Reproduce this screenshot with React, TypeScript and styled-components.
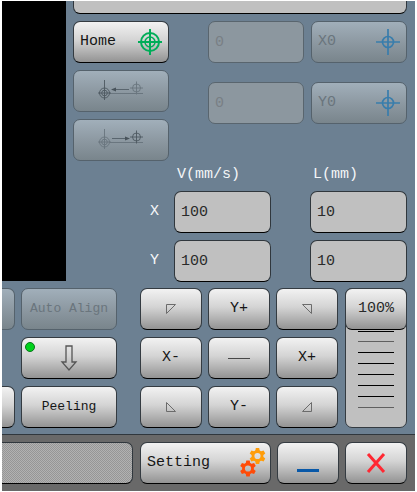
import React, { useState } from "react";
import styled, { createGlobalStyle, css } from "styled-components";

const GlobalStyle = createGlobalStyle`
  *, *::before, *::after { box-sizing: border-box; }
  body { margin: 0; background: #fff; }
  body, button, input, output {
    font-family: "Liberation Mono", "Courier New", monospace;
    font-size: 15px;
    line-height: 18px;
  }
`;

const Screen = styled.main`
  padding: 1px 2px;
`;

const Console = styled.div`
  background: #6c8092;
  overflow: hidden;
`;

const Upper = styled.div`
  display: flex;
  height: 280px;
`;

const Preview = styled.div`
  width: 64px;
  flex: none;
  background: #000;
`;

const Controls = styled.section`
  flex: 1;
  min-width: 0;
  padding: 0 8px 0 7px;
`;

const fieldLook = css`
  width: 100%;
  min-width: 0;
  margin: 0;
  color: #2a2a2a;
  background: #c0c0c0;
  border: 1px solid #30373d;
  border-bottom-color: #000;
  border-radius: 7px;
  outline: none;
`;

const MessageField = styled.input`
  ${fieldLook}
  display: block;
  height: 13px;
  border-top: 0;
  border-radius: 0 0 7px 7px;
`;

const Field = styled.input`
  ${fieldLook}
  height: 42px;
  padding: 0 6px;

  &:disabled {
    color: #797f85;
    background: #8c979f;
    border-color: #59656e;
  }
`;

const Key = styled.button<{ $small?: boolean; $spread?: boolean; $cut?: boolean }>`
  position: relative;
  display: flex;
  align-items: center;
  justify-content: ${(p) => (p.$spread ? "space-between" : "center")};
  width: 100%;
  min-width: 0;
  height: 42px;
  margin: 0;
  padding: ${(p) => (p.$spread ? "0 6px" : "0")};
  font-size: ${(p) => (p.$small ? "13px" : "15px")};
  white-space: nowrap;
  color: #161616;
  background: linear-gradient(#f2f2f2, #d4d4d4 45%, #939393);
  border: 1px solid #343b41;
  border-bottom-color: #000;
  border-radius: 7px;

  &:disabled {
    color: #6a757d;
    background: linear-gradient(#a1afba, #8d99a2 50%, #79858c);
    border-color: #55626c;
  }

  ${(p) =>
    p.$cut &&
    css`
      border-left: 0;
      border-radius: 0 7px 7px 0;
    `}
`;

const KeyText = styled.span`
  display: block;
`;

const Origins = styled.div`
  display: grid;
  grid-template-columns: 96fr 25px 96fr 96fr;
  column-gap: 7px;
  margin-top: 7px;
`;

const Stack = styled.div`
  display: grid;
  align-content: start;
  row-gap: 7px;
`;

const OriginPair = styled.div`
  grid-column: 3 / 5;
  display: grid;
  grid-template-columns: 1fr 1fr;
  align-content: start;
  gap: 19px 7px;
`;

const Speeds = styled.div`
  display: grid;
  grid-template-columns: 94px 1fr 25px 1fr;
  gap: 7px;
  align-items: center;
  margin-top: 5px;
  color: #f4f6f8;
`;

const ColumnTitle = styled.span<{ $column: number }>`
  grid-column: ${(p) => p.$column};
  padding-left: 3px;
  white-space: nowrap;
`;

const AxisName = styled.span`
  grid-column: 1;
  justify-self: end;
  padding-right: 8px;
`;

const LengthCell = styled.div`
  grid-column: 4;
`;

const Lower = styled.section`
  display: grid;
  grid-template-columns: 13px minmax(0, 330fr) minmax(0, 62fr);
  padding: 7px 8px 6px 0;
`;

const Actions = styled.div`
  display: grid;
  grid-template-columns: minmax(0, 96fr) minmax(0, 198fr);
  column-gap: 23px;
  padding: 0 7px 0 6px;
`;

const CutSpace = styled.div`
  height: 42px;
`;

const JogPad = styled.div`
  display: grid;
  grid-template-columns: repeat(3, 1fr);
  gap: 7px 6px;
`;

const StatusLamp = styled.span`
  position: absolute;
  top: 4px;
  left: 3px;
  width: 10px;
  height: 10px;
  background: #00d21c;
  border: 1px solid #08751a;
  border-radius: 50%;
`;

const Slider = styled.div`
  position: relative;
  height: 140px;
  background: #c0c0c0;
  border: 1px solid #343b41;
  border-radius: 7px;
`;

const Ticks = styled.svg`
  display: block;
  width: 100%;
  height: 100%;
`;

const Range = styled.input`
  position: absolute;
  inset: -1px;
  width: calc(100% + 2px);
  height: 140px;
  margin: 0;
  appearance: none;
  background: transparent;
  writing-mode: vertical-lr;
  direction: rtl;
  outline: none;

  &::-webkit-slider-runnable-track {
    width: 100%;
    height: 100%;
  }

  &::-webkit-slider-thumb {
    appearance: none;
    width: 100%;
    height: 42px;
    background: linear-gradient(#f2f2f2, #d4d4d4 45%, #939393);
    border: 1px solid #343b41;
    border-bottom-color: #000;
    border-radius: 7px;
  }
`;

const RangeValue = styled.output`
  position: absolute;
  left: 0;
  right: 0;
  text-align: center;
  color: #2a2a2a;
  pointer-events: none;
`;

const Footer = styled.footer`
  display: grid;
  grid-template-columns: minmax(0, 131fr) minmax(0, 267fr);
  column-gap: 7px;
  padding: 7px 8px 7px 0;
  background: #696969;
  border-top: 1px solid #30373d;
`;

const StatusBar = styled.div`
  height: 42px;
  background: repeating-conic-gradient(#969696 0 25%, #b2b2b2 0 50%) 0 0 / 2px 2px;
  border: 1px solid #30373d;
  border-left: 0;
  border-bottom-color: #000;
  border-radius: 0 7px 7px 0;
`;

const FooterKeys = styled.div`
  display: grid;
  grid-template-columns: 131fr 62fr 62fr;
  column-gap: 6px;
`;

function HomeTarget() {
  return (
    <svg width="24" height="26" viewBox="0 0 24 26" fill="none" stroke="#00ad58" strokeWidth="2" aria-hidden="true">
      <circle cx="12" cy="13" r="9" />
      <circle cx="12" cy="13" r="5" strokeWidth="1.500" />
      <path d="M12 0v26M0 13h24" />
    </svg>
  );
}

function Crosshair() {
  return (
    <svg width="24" height="26" viewBox="0 0 24 26" fill="none" stroke="#397dac" strokeWidth="1.700" aria-hidden="true">
      <circle cx="12" cy="13" r="5.500" />
      <path d="M12 0v26M0 13h24" />
    </svg>
  );
}

function MoveOrigin({ toLeft }: { toLeft?: boolean }) {
  const target = toLeft ? "#4d5860" : "#69757e";
  const source = toLeft ? "#69757e" : "#4d5860";
  return (
    <svg width="46" height="22" viewBox="0 0 46 22" fill="none" aria-hidden="true">
      <path d="M12 13.500h33" stroke="#6a767f" />
      <g stroke={target} strokeWidth="0.900">
        <circle cx="6.500" cy="13" r="5" />
        <circle cx="6.500" cy="13" r="2.800" />
        <path d="M6.500 0v20M0 13h13" />
      </g>
      <g stroke={source} strokeWidth="0.900">
        <circle cx="38.500" cy="8" r="4" />
        <path d="M38.500 1.500v13M32 8h13" />
      </g>
      <path d="M14 9.500h17" stroke="#59656e" />
      <path d={toLeft ? "M13 9.500l5-2v4z" : "M32 9.500l-5-2v4z"} fill="#48535b" />
    </svg>
  );
}

function DownArrow() {
  return (
    <svg width="18" height="26" viewBox="0 0 18 26" fill="none" stroke="#555" strokeWidth="1.300" aria-hidden="true">
      <path d="M6 1h6v16h4L9 25 2 17h4z" />
    </svg>
  );
}

type Corner = "nw" | "ne" | "sw" | "se";

const cornerPaths: Record<Corner, string> = {
  nw: "M1.500 1.500h9l-9 9z",
  ne: "M1.500 1.500h9v9z",
  sw: "M1.500 1.500v9h9z",
  se: "M10.500 1.500v9h-9z",
};

function CornerIcon({ corner }: { corner: Corner }) {
  return (
    <svg width="12" height="12" viewBox="0 0 12 12" fill="none" stroke="#6b6b6b" aria-hidden="true">
      <path d={cornerPaths[corner]} />
    </svg>
  );
}

function Dash() {
  return (
    <svg width="24" height="4" viewBox="0 0 24 4" aria-hidden="true">
      <path d="M1 2.500h22" stroke="#484848" />
    </svg>
  );
}

function Gear({ x, y, color }: { x: number; y: number; color: string }) {
  return (
    <g transform={`translate(${x} ${y})`}>
      <circle r="4.500" fill="none" stroke={color} strokeWidth="2.800" />
      {[0, 60, 120, 180, 240, 300].map((angle) => (
        <path key={angle} d="M-1.700 -8h3.400l.6 3.200h-4.600z" fill={color} transform={`rotate(${angle})`} />
      ))}
    </g>
  );
}

function Gears() {
  return (
    <svg width="24" height="30" viewBox="0 0 24 30" overflow="visible" aria-hidden="true">
      <Gear x={17.5} y={8} color="#ff9d0a" />
      <Gear x={8} y={20.5} color="#ff4b08" />
    </svg>
  );
}

function MinimizeIcon() {
  return (
    <svg width="24" height="26" viewBox="0 0 24 26" aria-hidden="true">
      <path d="M1 20.500h22" stroke="#0858a8" strokeWidth="3" />
    </svg>
  );
}

function CloseIcon() {
  return (
    <svg width="20" height="22" viewBox="0 0 20 22" aria-hidden="true">
      <path d="M2 2l16 18M18 2L2 20" stroke="#ff2832" strokeWidth="3" />
    </svg>
  );
}

const axes = ["X", "Y"];
const tickRows = [43, 53, 64, 75, 86, 97, 108, 119];

export default function App() {
  const [rate, setRate] = useState(100);

  return (
    <>
      <GlobalStyle />
      <Screen>
        <Console>
          <Upper>
            <Preview />
            <Controls>
              <MessageField aria-label="Message" readOnly />
              <Origins>
                <Stack>
                  <Key $spread>
                    <KeyText>Home</KeyText>
                    <HomeTarget />
                  </Key>
                  <Key disabled aria-label="Move origin left">
                    <MoveOrigin toLeft />
                  </Key>
                  <Key disabled aria-label="Move origin right">
                    <MoveOrigin />
                  </Key>
                </Stack>
                <OriginPair>
                  {axes.map((axis) => (
                    <React.Fragment key={axis}>
                      <Field aria-label={`${axis} position`} defaultValue="0" disabled />
                      <Key $spread disabled>
                        <KeyText>{axis}0</KeyText>
                        <Crosshair />
                      </Key>
                    </React.Fragment>
                  ))}
                </OriginPair>
              </Origins>
              <Speeds>
                <ColumnTitle $column={2}>V(mm/s)</ColumnTitle>
                <ColumnTitle $column={4}>L(mm)</ColumnTitle>
                {axes.map((axis) => (
                  <React.Fragment key={axis}>
                    <AxisName>{axis}</AxisName>
                    <Field aria-label={`${axis} speed, mm/s`} defaultValue="100" />
                    <LengthCell>
                      <Field aria-label={`${axis} length, mm`} defaultValue="10" />
                    </LengthCell>
                  </React.Fragment>
                ))}
              </Speeds>
            </Controls>
          </Upper>

          <Lower>
            <Stack>
              <Key $cut disabled aria-label="Align" />
              <CutSpace />
              <Key $cut aria-label="Film" />
            </Stack>
            <Actions>
              <Stack>
                <Key $small disabled>
                  <KeyText>Auto Align</KeyText>
                </Key>
                <Key aria-label="Lower">
                  <StatusLamp />
                  <DownArrow />
                </Key>
                <Key $small>
                  <KeyText>Peeling</KeyText>
                </Key>
              </Stack>
              <JogPad>
                <Key aria-label="Up left"><CornerIcon corner="nw" /></Key>
                <Key><KeyText>Y+</KeyText></Key>
                <Key aria-label="Up right"><CornerIcon corner="ne" /></Key>
                <Key><KeyText>X-</KeyText></Key>
                <Key aria-label="Stop"><Dash /></Key>
                <Key><KeyText>X+</KeyText></Key>
                <Key aria-label="Down left"><CornerIcon corner="sw" /></Key>
                <Key><KeyText>Y-</KeyText></Key>
                <Key aria-label="Down right"><CornerIcon corner="se" /></Key>
              </JogPad>
            </Actions>
            <Slider>
              <Ticks viewBox="0 0 60 138" preserveAspectRatio="none" aria-hidden="true">
                {tickRows.map((y, i) => (
                  <path
                    key={y}
                    d={`M12 ${y - 0.5}h36`}
                    stroke={i === 1 || i === 7 ? "#606060" : "#000"}
                  />
                ))}
              </Ticks>
              <Range
                type="range"
                min={0}
                max={100}
                value={rate}
                aria-label="Speed rate"
                onChange={(e) => setRate(Number(e.target.value))}
              />
              <RangeValue style={{ top: 11 + Math.round((100 - rate) * 0.98) }}>{rate}%</RangeValue>
            </Slider>
          </Lower>

          <Footer>
            <StatusBar />
            <FooterKeys>
              <Key $spread>
                <KeyText>Setting</KeyText>
                <Gears />
              </Key>
              <Key aria-label="Minimize"><MinimizeIcon /></Key>
              <Key aria-label="Close"><CloseIcon /></Key>
            </FooterKeys>
          </Footer>
        </Console>
      </Screen>
    </>
  );
}
